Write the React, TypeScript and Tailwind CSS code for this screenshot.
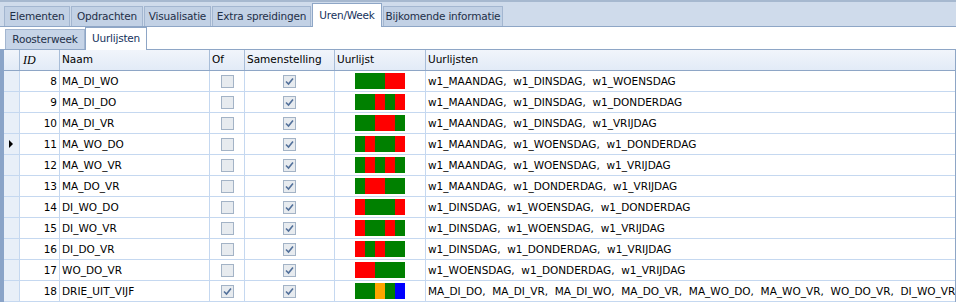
const rows = [
  { id: 8, naam: "MA_DI_WO", of: false, bar: "GGGRR", list: "w1_MAANDAG,  w1_DINSDAG,  w1_WOENSDAG" },
  { id: 9, naam: "MA_DI_DO", of: false, bar: "GGRGR", list: "w1_MAANDAG,  w1_DINSDAG,  w1_DONDERDAG" },
  { id: 10, naam: "MA_DI_VR", of: false, bar: "GGRRG", list: "w1_MAANDAG,  w1_DINSDAG,  w1_VRIJDAG" },
  { id: 11, naam: "MA_WO_DO", of: false, bar: "GRGGR", list: "w1_MAANDAG,  w1_WOENSDAG,  w1_DONDERDAG", current: true },
  { id: 12, naam: "MA_WO_VR", of: false, bar: "GRGRG", list: "w1_MAANDAG,  w1_WOENSDAG,  w1_VRIJDAG" },
  { id: 13, naam: "MA_DO_VR", of: false, bar: "GRRGG", list: "w1_MAANDAG,  w1_DONDERDAG,  w1_VRIJDAG" },
  { id: 14, naam: "DI_WO_DO", of: false, bar: "RGGGR", list: "w1_DINSDAG,  w1_WOENSDAG,  w1_DONDERDAG" },
  { id: 15, naam: "DI_WO_VR", of: false, bar: "RGGRG", list: "w1_DINSDAG,  w1_WOENSDAG,  w1_VRIJDAG" },
  { id: 16, naam: "DI_DO_VR", of: false, bar: "RGRGG", list: "w1_DINSDAG,  w1_DONDERDAG,  w1_VRIJDAG" },
  { id: 17, naam: "WO_DO_VR", of: false, bar: "RRGGG", list: "w1_WOENSDAG,  w1_DONDERDAG,  w1_VRIJDAG" },
  { id: 18, naam: "DRIE_UIT_VIJF", of: true, bar: "GGOGB", list: "MA_DI_DO,  MA_DI_VR,  MA_DI_WO,  MA_DO_VR,  MA_WO_DO,  MA_WO_VR,  WO_DO_VR,  DI_WO_VR,  DI_DO_VR" },
];

const segColor: Record<string, string> = {
  G: "bg-[#008000]",
  R: "bg-[#ff0000]",
  O: "bg-[#ffa500]",
  B: "bg-[#0000ff]",
};

const mainTabs = [
  { label: "Elementen", w: "w-[66px]" },
  { label: "Opdrachten", w: "w-[72px]" },
  { label: "Visualisatie", w: "w-[67px]" },
  { label: "Extra spreidingen", w: "w-[99px]" },
  { label: "Uren/Week", w: "w-[70px]", active: true },
  { label: "Bijkomende informatie", w: "w-[120px]" },
];

function Check({ checked }: { checked: boolean }) {
  return (
    <div className="w-[13px] h-[13px] border border-[#a3b3c6] bg-[#e7ebef] flex items-center justify-center">
      {checked && (
        <svg width="9" height="9" viewBox="0 0 9 9">
          <path d="M1 4.5 L3.5 7 L8 1.5" fill="none" stroke="#52709a" strokeWidth="1.6" />
        </svg>
      )}
    </div>
  );
}

export default function App() {
  return (
    <div className="w-[956px] h-[303px] bg-white overflow-hidden text-[10.5px] text-black" style={{ fontFamily: "'DejaVu Sans', sans-serif" }}>
      {/* main tab strip */}
      <div className="h-[27px] bg-[#cfdbeb] border-t-2 border-[#a6b8cf] border-b border-b-[#8ea6c6] flex items-end pl-[4px]">
        {mainTabs.map((t) =>
          t.active ? (
            <div key={t.label} className={`${t.w} shrink-0 h-[24px] -mb-px mr-px bg-white border border-b-0 border-[#8ea6c6] flex items-center justify-center whitespace-nowrap tracking-[-0.2px] text-[10.5px] text-[#15325c]`}>
              {t.label}
            </div>
          ) : (
            <div key={t.label} className={`${t.w} shrink-0 h-[20px] mr-px bg-[#c2d1e5] border border-b-0 border-[#a3b6d0] flex items-center justify-center whitespace-nowrap tracking-[-0.2px] text-[10.5px] text-[#1e2f48]`}>
              {t.label}
            </div>
          )
        )}
      </div>

      {/* sub tabs */}
      <div className="h-[23px] flex items-end pl-[5px] border-b border-[#8ea6c6]">
        <div className="w-[80px] shrink-0 h-[20px] bg-[#c6d4e7] border border-b-0 border-[#a3b6d0] flex items-center justify-center whitespace-nowrap tracking-[-0.2px] text-[10.5px] text-[#1e2f48]">Roosterweek</div>
        <div className="w-[62px] shrink-0 h-[23px] -mb-px bg-white border border-b-0 border-[#8ea6c6] flex items-center justify-center whitespace-nowrap tracking-[-0.2px] text-[10.5px] text-[#15325c]">Uurlijsten</div>
      </div>

      {/* grid */}
      <div className="flex">
        <div className="w-[4px] bg-[#8aa4c8] shrink-0" />
        <div className="flex-1 min-w-0 border-r border-[#8ea6c6]">
          <div className="h-[21px] flex bg-gradient-to-b from-[#f1f5fb] to-[#e2ebf7] border-b border-[#8ea6c6]">
            <div className="w-[16px] shrink-0 border-r border-[#a8bdd8]" />
            <div className="w-[40px] shrink-0 border-r border-[#a8bdd8] px-[3px] flex items-center italic text-[12px]" style={{ fontFamily: "'Liberation Serif', serif" }}>ID</div>
            <div className="w-[150px] shrink-0 border-r border-[#a8bdd8] px-[2px] flex items-center">Naam</div>
            <div className="w-[35px] shrink-0 border-r border-[#a8bdd8] px-[2px] flex items-center">Of</div>
            <div className="w-[90px] shrink-0 border-r border-[#a8bdd8] px-[2px] flex items-center">Samenstelling</div>
            <div className="w-[91px] shrink-0 border-r border-[#a8bdd8] px-[2px] flex items-center">Uurlijst</div>
            <div className="flex-1 px-[2px] flex items-center">Uurlijsten</div>
          </div>
          {rows.map((r) => (
            <div key={r.id} className="h-[21px] flex border-b border-[#c5d8f0]">
              <div className="w-[16px] shrink-0 bg-[#e8eff8] border-r border-[#c5d8f0] flex items-center justify-center">
                {r.current && (
                  <svg width="5" height="8" viewBox="0 0 5 8">
                    <path d="M0 0 L4 4 L0 8 Z" fill="#000" />
                  </svg>
                )}
              </div>
              <div className="w-[40px] shrink-0 border-r border-[#c5d8f0] pr-[2px] pt-px flex items-center justify-end">{r.id}</div>
              <div className="w-[150px] shrink-0 border-r border-[#c5d8f0] px-[2px] pt-px flex items-center">{r.naam}</div>
              <div className="w-[35px] shrink-0 border-r border-[#c5d8f0] flex items-center justify-center">
                <Check checked={r.of} />
              </div>
              <div className="w-[90px] shrink-0 border-r border-[#c5d8f0] flex items-center justify-center">
                <Check checked />
              </div>
              <div className="w-[91px] shrink-0 border-r border-[#c5d8f0] flex items-center justify-center">
                <div className="flex h-[16px] w-[50px]">
                  {r.bar.split("").map((c, i) => (
                    <div key={i} className={`w-[10px] h-full ${segColor[c]}`} />
                  ))}
                </div>
              </div>
              <div className="flex-1 min-w-0 px-[2px] pt-px flex items-center whitespace-pre overflow-hidden">{r.list}</div>
            </div>
          ))}
        </div>
      </div>
    </div>
  );
}
